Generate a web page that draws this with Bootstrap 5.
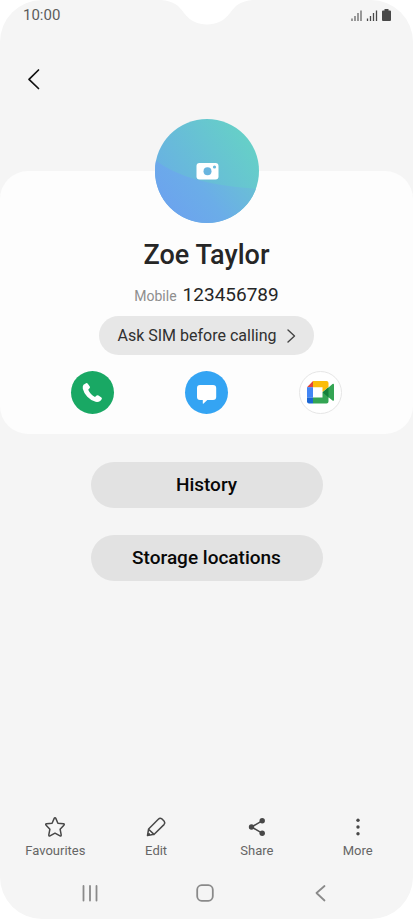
<!DOCTYPE html>
<html lang="en">
<head>
<meta charset="utf-8">
<meta name="viewport" content="width=device-width, initial-scale=1">
<title>Zoe Taylor</title>
<link href="https://cdn.jsdelivr.net/npm/bootstrap@5.3.0/dist/css/bootstrap.min.css" rel="stylesheet">
<style>
body{font-family:Roboto,"Liberation Sans",sans-serif;background:#fff;color:#262626}
svg{display:block}
.phone{background:#f5f5f5;border-radius:42px}
.notch{top:0;left:50%;transform:translateX(-50%)}
.status{height:30px;padding:0 22px 0 23px;font-size:15px;color:#5c5c5c}
.topbar{padding:30px 14px 0}
.back{width:40px;height:38px}
.contact{background:#fdfdfd;border-radius:28px;margin-top:73px;padding-bottom:20px}
.avatar{width:104px;height:104px;margin-top:-52px}
.name{font-size:27px;line-height:36px;font-weight:500;margin:14px 0 8px}
.phone-row{line-height:28px;margin-bottom:6px;gap:6px}
.kind{font-size:14px;color:#8e8e8e}
.number{font-size:19px}
.sim{background:#e7e7e7;height:39px;padding:0 18px;gap:10px;font-size:16px;color:#303030}
.sim:hover{background:#dfdfdf}
.actions{padding:0 36px 0 35px;margin-top:16px}
.round{width:43px;height:43px}
.call{background:#19a864}
.chat{background:#34a4f3}
.meet{background:#fff;border:1px solid #e6e6e6}
.wide{background:#e2e2e2;width:232px;height:46px;font-size:19px;font-weight:500;color:#080808}
.wide:hover{background:#d9d9d9}
.links{margin-top:28px;gap:27px}
.tools{padding:0 5px}
.tool{font-size:13px;line-height:18px;color:#666;gap:3px}
.keys{padding:13px 34px 6px 32px}
.key{height:40px}
</style>
<script src="https://cdn.jsdelivr.net/npm/bootstrap@5.3.0/dist/js/bootstrap.bundle.min.js"></script>
</head>
<body>
<div class="phone position-relative min-vh-100 d-flex flex-column overflow-hidden">
  <svg class="notch position-absolute" width="92" height="25" viewBox="0 0 92 25" fill="#fff" aria-hidden="true"><path d="M0 0C13 1 18 6 23 13C29 21 37 24.500 46 24.500S63 21 69 13C74 6 79 1 92 0Z"/></svg>
  <header>
    <div class="status d-flex align-items-center justify-content-between">
      <span>10:00</span>
      <svg width="41" height="14" viewBox="0 0 41 14" aria-label="Signal and battery" role="img">
        <g stroke="#666" stroke-width="1.300"><path d="M2 13v-2.500M5 13V8M8 13V5M11 13V2.500"/><path stroke="#484848" d="M17.500 13v-2.500M20.500 13V8M23.500 13V5M26.500 13V2.500"/></g>
        <path fill="#484848" d="M34.500 1h4v1.500H40q1 0 1 1v8.500q0 1-1 1h-7q-1 0-1-1V3.500q0-1 1-1h1.500z"/>
      </svg>
    </div>
    <div class="topbar">
      <button type="button" class="back btn p-0 border-0 d-flex align-items-center justify-content-center" aria-label="Back">
        <svg width="14" height="22" viewBox="0 0 14 22" fill="none" stroke="#111" stroke-width="1.700" stroke-linecap="round" stroke-linejoin="round"><path d="M11.500 2L2 11.300L11.500 20.500"/></svg>
      </button>
    </div>
  </header>
  <main>
    <section class="contact d-flex flex-column align-items-center">
      <button type="button" class="avatar btn p-0 border-0 rounded-circle" aria-label="Add photo">
        <svg width="104" height="104" viewBox="0 0 104 104">
          <defs>
            <linearGradient id="ga" x1="0.050" y1="0.700" x2="0.850" y2="0.150"><stop offset="0" stop-color="#69aee5"/><stop offset="1" stop-color="#66cfc8"/></linearGradient>
            <linearGradient id="gb" x1="0" y1="0.700" x2="1" y2="0.200"><stop offset="0" stop-color="#6ca2ef"/><stop offset="0.450" stop-color="#6bade8"/><stop offset="1" stop-color="#69c5d0"/></linearGradient>
            <clipPath id="disc"><circle cx="52" cy="52" r="52"/></clipPath>
          </defs>
          <g clip-path="url(#disc)"><path fill="url(#ga)" d="M0 0h104v104H0z"/><path fill="url(#gb)" d="M0 41Q32 66 104 70V104H0z"/></g>
          <rect x="41.500" y="44" width="22" height="16.500" rx="3" fill="#fff"/><circle cx="52.500" cy="52.300" r="4" fill="#69b5df"/><circle cx="59.500" cy="48" r="1.600" fill="#69b9dc"/>
        </svg>
      </button>
      <h1 class="name text-center">Zoe Taylor</h1>
      <div class="phone-row d-flex align-items-baseline"><span class="kind">Mobile</span><span class="number">123456789</span></div>
      <button type="button" class="sim btn border-0 rounded-pill d-flex align-items-center">Ask SIM before calling
        <svg width="9" height="14" viewBox="0 0 9 14" fill="none" stroke="#444" stroke-width="1.400" stroke-linecap="round" stroke-linejoin="round"><path d="M1 1L7.500 7L1 13"/></svg>
      </button>
      <div class="actions d-flex w-100">
        <div class="flex-fill d-flex justify-content-center"><button type="button" class="round call btn p-0 border-0 rounded-circle" aria-label="Call">
          <svg width="43" height="43" viewBox="0 0 43 43" fill="#fff"><path d="M12.500 13.800L15 12.200Q16 11.700 16.800 12.700L18.800 15.500Q19.300 16.400 18.500 17.300L17.200 18.700Q18.200 21 20 22.900Q21.900 24.900 24 25.900L25.600 24.600Q26.500 23.900 27.500 24.500L30.400 26.400Q31.300 27.200 30.700 28.200L29.200 30Q27.300 31.300 24.600 30.800Q20 29.700 16.300 25.800Q12.700 21.800 11.800 17.800Q11.400 15.200 12.500 13.800Z"/></svg>
        </button></div>
        <div class="flex-fill d-flex justify-content-center"><button type="button" class="round chat btn p-0 border-0 rounded-circle" aria-label="Message">
          <svg width="43" height="43" viewBox="0 0 43 43" fill="#fff"><path d="M15 14H28Q31.200 14 31.200 17V26Q31.200 29 28 29H22.300L18.600 32.600Q17.800 33.200 17.800 32.200V29H15Q12 29 12 26V17Q12 14 15 14Z"/></svg>
        </button></div>
        <div class="flex-fill d-flex justify-content-center"><button type="button" class="round meet btn p-0 rounded-circle d-flex align-items-center justify-content-center" aria-label="Video call">
          <svg width="27" height="23" viewBox="0 0 27 23"><path fill="#e1453c" d="M0 6.200L6 0V6.200z"/><path fill="#fbbc09" d="M6 0H19.500Q21.500 0 21.500 2V6L15.500 11V6.200H6z"/><path fill="#4386f5" d="M0 6.200H6V16.500H0z"/><path fill="#1b66d3" d="M0 16.500H6V22.500H2Q0 22.500 0 20.500z"/><path fill="#34a554" d="M6 16.500H15.500V11.500L21.500 6.500V20.500Q21.500 22.500 19.500 22.500H6zM21.500 6.500L25.500 3Q27 2.200 27 4V18.800Q27 20.500 25.500 19.500L21.500 16.200z"/><path fill="#15803b" d="M15.500 11.300L21.500 6.200V16.400z"/></svg>
        </button></div>
      </div>
    </section>
    <div class="links d-flex flex-column align-items-center">
      <button type="button" class="wide btn border-0 rounded-pill p-0">History</button>
      <button type="button" class="wide btn border-0 rounded-pill p-0">Storage locations</button>
    </div>
  </main>
  <footer class="mt-auto pt-4">
    <div class="tools row g-0 row-cols-4">
      <div class="col"><button type="button" class="tool btn p-0 border-0 w-100 d-flex flex-column align-items-center">
        <svg width="24" height="24" viewBox="0 0 24 24" fill="none" stroke="#484848" stroke-width="1.500" stroke-linejoin="round"><path d="M12 2.700Q12.500 2.700 12.800 3.400L14.900 8.200L20.400 8.800Q21.900 9.100 20.900 10.200L17.100 14.200L18.200 19.900Q18.300 21.400 17 20.900L12 18.200L7 20.900Q5.700 21.400 5.800 19.900L6.900 14.200L3.100 10.200Q2.100 9.100 3.600 8.800L9.100 8.200L11.200 3.400Q11.500 2.700 12 2.700Z"/></svg>Favourites</button></div>
      <div class="col"><button type="button" class="tool btn p-0 border-0 w-100 d-flex flex-column align-items-center">
        <svg width="24" height="24" viewBox="0 0 24 24" fill="none" stroke="#484848" stroke-width="1.500" stroke-linejoin="round" stroke-linecap="round"><path d="M3.500 20.500L4.600 14L14.300 4.200Q16 2.500 17.800 3.800L20.200 6.200Q21.500 7.900 20 9.600L10.200 19.200ZM4.600 14.200L10 19.400M3.700 20.300L5.200 18.800"/></svg>Edit</button></div>
      <div class="col"><button type="button" class="tool btn p-0 border-0 w-100 d-flex flex-column align-items-center">
        <svg width="24" height="24" viewBox="0 0 24 24" fill="#484848" stroke="#484848" stroke-width="1.500"><path fill="none" d="M17.500 5.700L6.500 12L17.500 18.300"/><g stroke="none"><circle cx="17.200" cy="5.700" r="2.700"/><circle cx="6.500" cy="12" r="2.700"/><circle cx="17.200" cy="18.300" r="2.700"/></g></svg>Share</button></div>
      <div class="col"><button type="button" class="tool btn p-0 border-0 w-100 d-flex flex-column align-items-center">
        <svg width="24" height="24" viewBox="0 0 24 24" fill="#484848"><circle cx="12" cy="5.300" r="1.700"/><circle cx="12" cy="12" r="1.700"/><circle cx="12" cy="18.700" r="1.700"/></svg>More</button></div>
    </div>
    <nav class="keys row g-0 row-cols-3" aria-label="System">
      <div class="col"><button type="button" class="key btn p-0 border-0 w-100 d-flex align-items-center justify-content-center" aria-label="Recent apps"><svg width="18" height="18" viewBox="0 0 18 18" stroke="#8a8a8a" stroke-width="1.800" stroke-linecap="round"><path d="M2.500 2v14.500M9 2v14.500M15.500 2v14.500"/></svg></button></div>
      <div class="col"><button type="button" class="key btn p-0 border-0 w-100 d-flex align-items-center justify-content-center" aria-label="Home"><svg width="18" height="18" viewBox="0 0 18 18" fill="none" stroke="#8a8a8a" stroke-width="1.800"><rect x="1.200" y="1.200" width="15.600" height="15.600" rx="4.500"/></svg></button></div>
      <div class="col"><button type="button" class="key btn p-0 border-0 w-100 d-flex align-items-center justify-content-center" aria-label="Back"><svg width="18" height="18" viewBox="0 0 18 18" fill="none" stroke="#8a8a8a" stroke-width="1.800" stroke-linecap="round" stroke-linejoin="round"><path d="M12.500 2L4.500 9L12.500 16.500"/></svg></button></div>
    </nav>
  </footer>
</div>
</body>
</html>
